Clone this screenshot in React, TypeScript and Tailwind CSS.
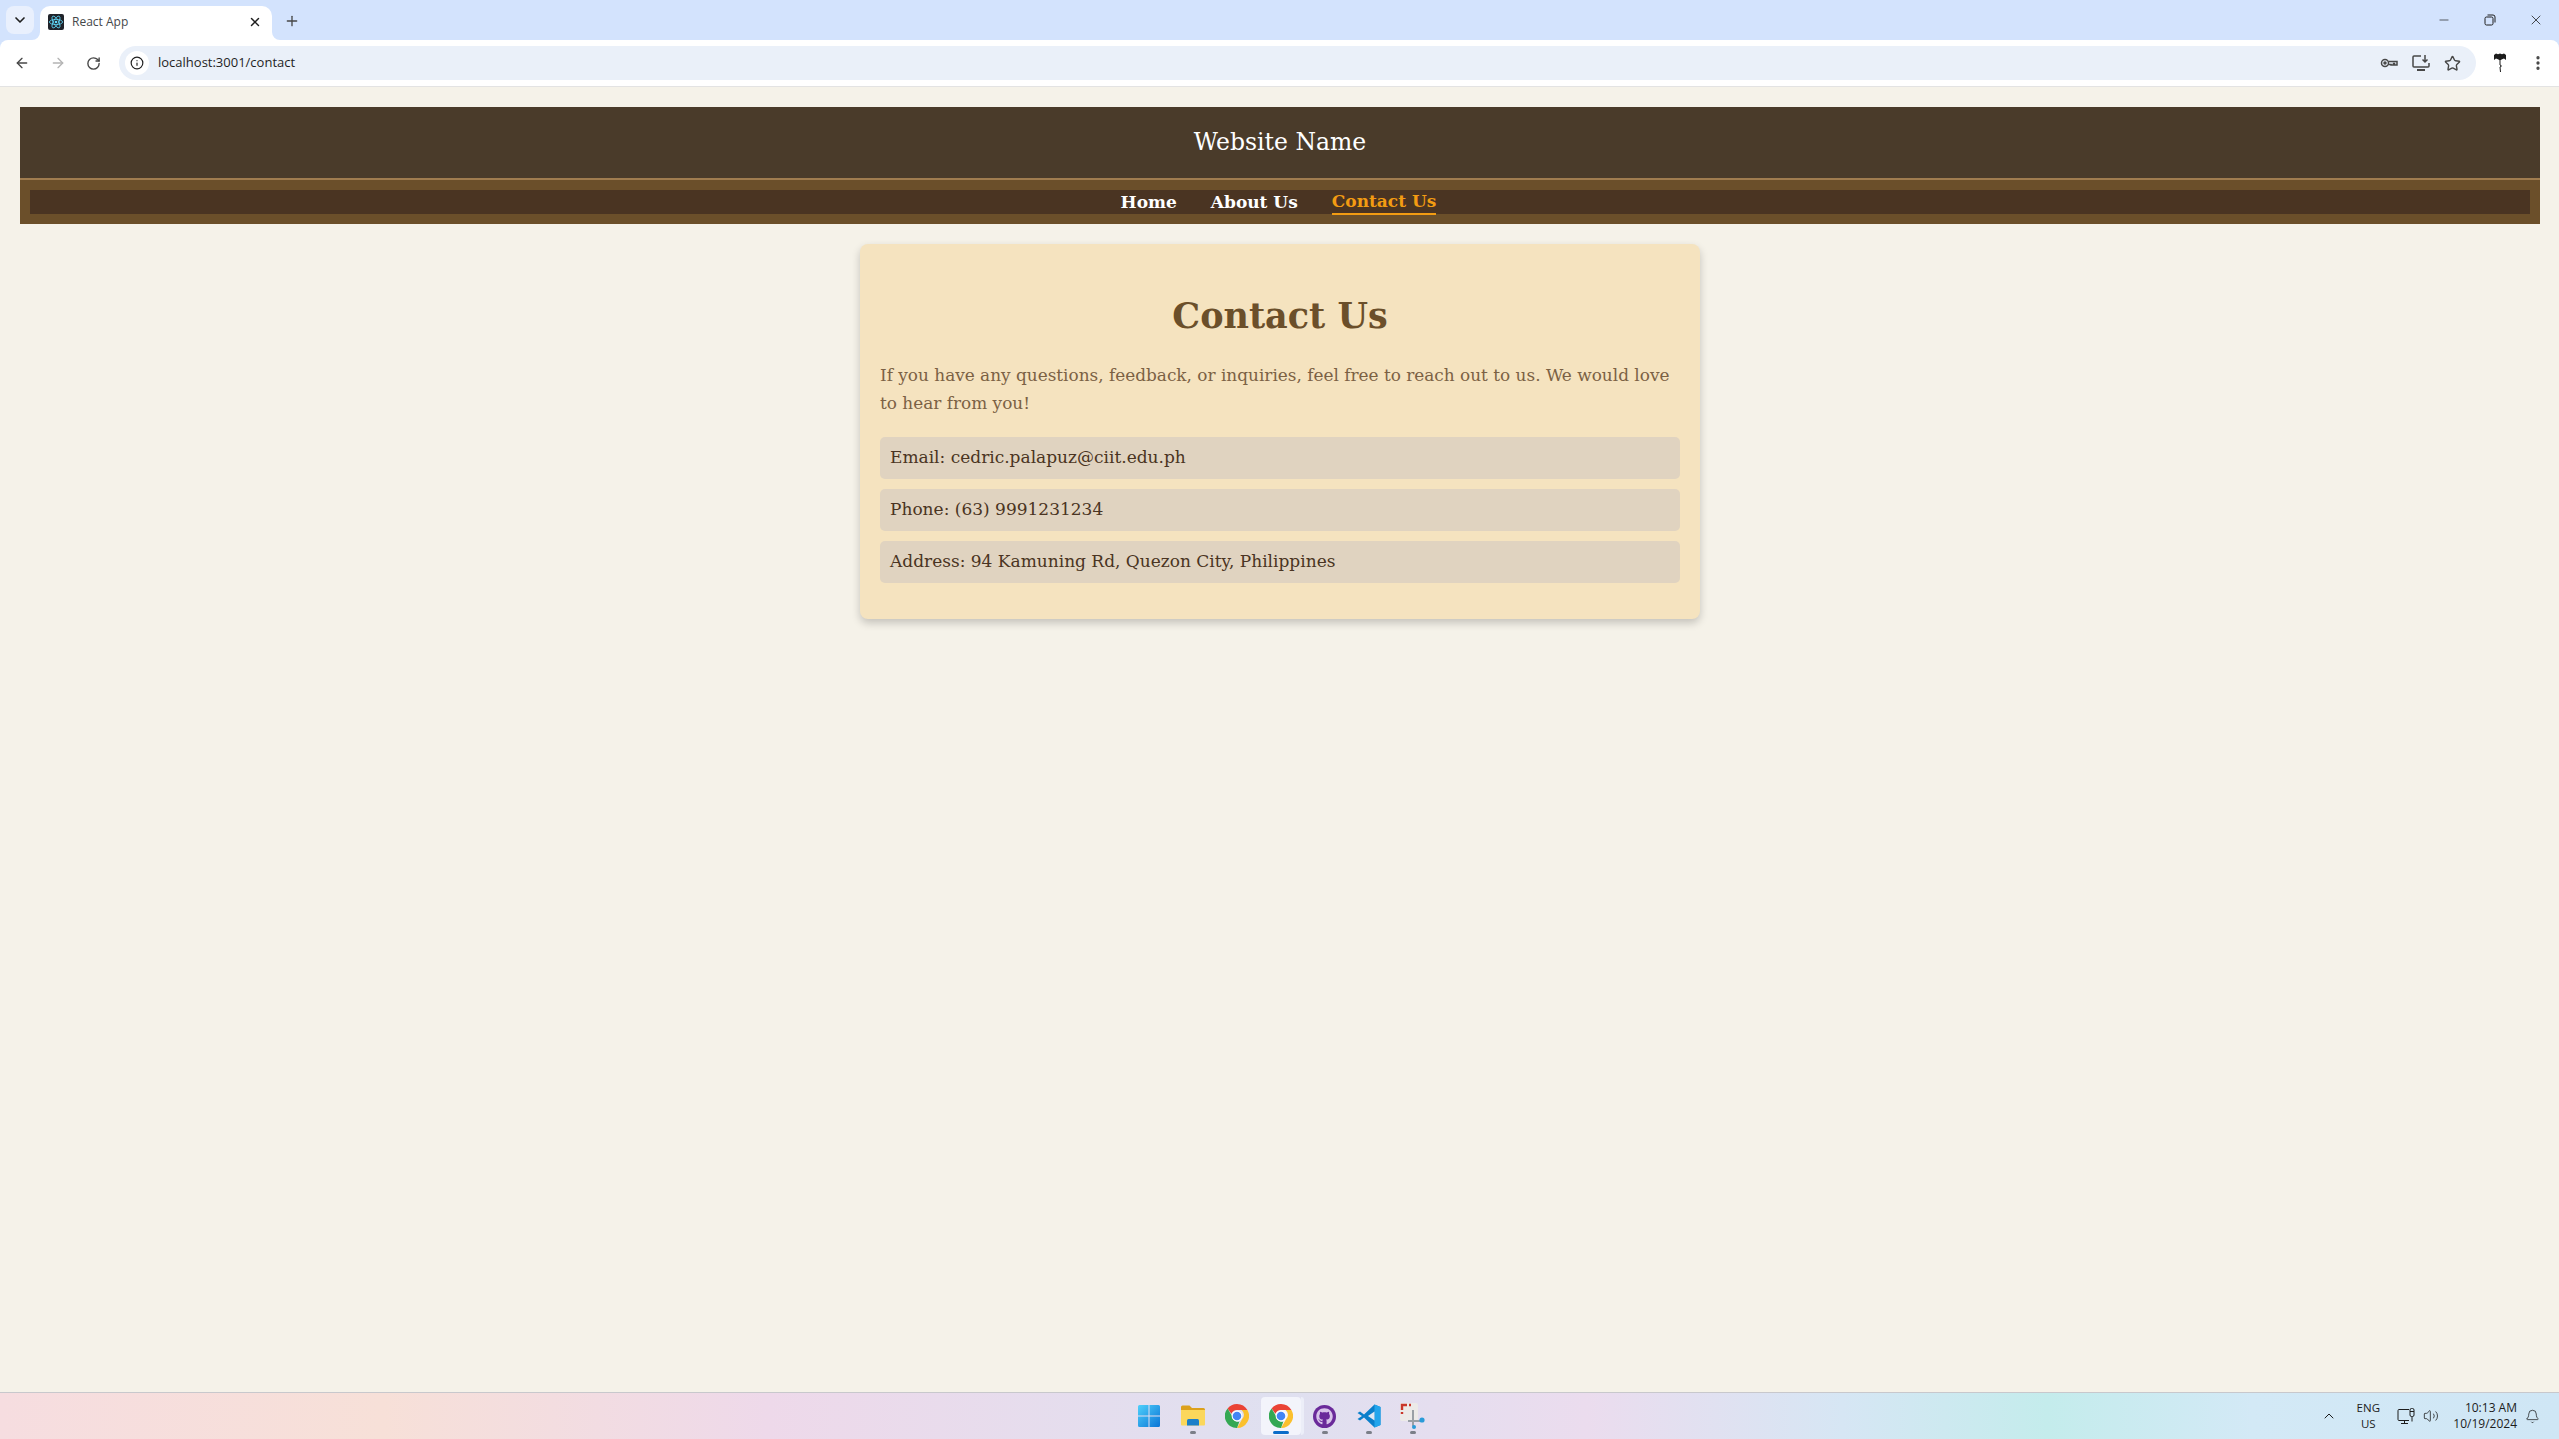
import React from "react";
import { ChevronDown, X, Plus, ArrowLeft, ArrowRight, RotateCw, Info, Star, EllipsisVertical, Minus, ChevronUp, Bell, Volume2 } from "lucide-react";
import { FaGithub } from "react-icons/fa";

const contactRows = [
  "Email: cedric.palapuz@ciit.edu.ph",
  "Phone: (63) 9991231234",
  "Address: 94 Kamuning Rd, Quezon City, Philippines",
];

function ReactFavicon() {
  return (
    <svg width="16" height="16" viewBox="0 0 16 16">
      <rect width="16" height="16" rx="2" fill="#20232a" />
      <g fill="none" stroke="#61dafb" strokeWidth="0.8">
        <ellipse cx="8" cy="8" rx="6.6" ry="2.6" />
        <ellipse cx="8" cy="8" rx="6.6" ry="2.6" transform="rotate(60 8 8)" />
        <ellipse cx="8" cy="8" rx="6.6" ry="2.6" transform="rotate(120 8 8)" />
      </g>
      <circle cx="8" cy="8" r="1.3" fill="#61dafb" />
    </svg>
  );
}

function ChromeLogo() {
  return (
    <svg width="24" height="24" viewBox="0 0 24 24">
      <path d="M12 0a12 12 0 0 1 10.4 6H12a6 6 0 0 0-5.6 3.8L2.6 4.4A12 12 0 0 1 12 0z" fill="#ea4335" />
      <path d="M22.4 6A12 12 0 0 1 12 24l5.2-9a6 6 0 0 0-.7-9z" fill="#fbc02d" />
      <path d="M12 24A12 12 0 0 1 2.6 4.4L7 12a6 6 0 0 0 7.4 5.6L12 24z" fill="#34a853" />
      <circle cx="12" cy="12" r="5.4" fill="#fff" />
      <circle cx="12" cy="12" r="4.3" fill="#4285f4" />
    </svg>
  );
}

function WindowsLogo() {
  return (
    <svg width="24" height="24" viewBox="0 0 24 24">
      <defs>
        <linearGradient id="win" x1="0" y1="0" x2="1" y2="1">
          <stop offset="0" stopColor="#4fd0fb" />
          <stop offset="1" stopColor="#0a74d6" />
        </linearGradient>
      </defs>
      <path d="M1 2.5A1.5 1.5 0 0 1 2.5 1h9v10.5H1zM12.5 1h9A1.5 1.5 0 0 1 23 2.5v9H12.5zM1 12.5h10.5V23h-9A1.5 1.5 0 0 1 1 21.5zM12.5 12.5H23v9a1.5 1.5 0 0 1-1.5 1.5h-9z" fill="url(#win)" />
    </svg>
  );
}

function ExplorerLogo() {
  return (
    <svg width="24" height="24" viewBox="0 0 24 24">
      <path d="M0 3a1.5 1.5 0 0 1 1.5-1.5h7L11 4h11.5A1.5 1.5 0 0 1 24 5.500V8H0z" fill="#dca11c" />
      <path d="M0 6h24v14.500a1 1 0 0 1-1 1H1a1 1 0 0 1-1-1z" fill="#fbd75b" />
      <path d="M6 16.500a1.500 1.500 0 0 1 1.500-1.500h9a1.500 1.500 0 0 1 1.500 1.500v5H6z" fill="#1b7fc9" />
    </svg>
  );
}

function VsCodeLogo() {
  return (
    <svg width="24" height="24" viewBox="0 0 24 24">
      <path d="M17.500 0.500 23.500 3v18l-6 2.500L7 13.500l-4 3-2.500-1.500L5 12 .5 9 3 7.500l4 3z" fill="#0a7fcb" />
      <path d="M17.500 0.500 23.500 3v18l-6 2.500z" fill="#22a5ec" />
      <path d="M17.500 7.500 11 12l6.500 4.500z" fill="#dfe7f3" />
    </svg>
  );
}

function SnipLogo() {
  return (
    <svg width="26" height="26" viewBox="0 0 26 26">
      <rect x="0" y="0" width="18" height="18" rx="2" fill="#eceae8" />
      <path d="M2 7V2h5M9 2h2M2 9v2" fill="none" stroke="#c9362b" strokeWidth="2.400" />
      <path d="M13 7v11h9M8 18h5v5" fill="none" stroke="#9aa0a6" strokeWidth="2" />
      <circle cx="22" cy="17" r="2.600" fill="#2a9bd8" />
      <circle cx="14" cy="24" r="2" fill="#2a9bd8" />
    </svg>
  );
}

function KeyIcon() {
  return (
    <svg width="18" height="18" viewBox="0 0 18 18" fill="none" stroke="#474747" strokeWidth="1.500">
      <circle cx="5" cy="9" r="3.500" />
      <circle cx="5" cy="9" r="1" fill="#474747" />
      <path d="M8.500 7.500H17v3.500h-2.500V9.500h-1V11H11V10.500H8.500" />
    </svg>
  );
}

function InstallIcon() {
  return (
    <svg width="18" height="18" viewBox="0 0 18 18" fill="none" stroke="#474747" strokeWidth="1.500">
      <path d="M9 2H2a1 1 0 0 0-1 1v9a1 1 0 0 0 1 1h14a1 1 0 0 0 1-1V9" />
      <path d="M5 16h8" strokeWidth="2" />
      <path d="M13 1v6.500M10.500 5.500 13 8l2.500-2.500" />
    </svg>
  );
}

function ProfileIcon() {
  return (
    <svg width="14" height="20" viewBox="0 0 14 20">
      <path d="M1 2 3 .5l2 .7 2-.7 2 .7 2-.7L13 2v5l-1 5-2.500 2L8.500 19 7 20 6 18l-1-4-2-2-1.500-5z" fill="#fff" />
      <path d="M1 2 3 .5l2 .7 2-.7 2 .7 2-.7L13 2v5l-2-1.500L8.500 6.500 7 8 5.500 6.500 3 5.500 1 7z" fill="#1c1c1c" />
      <path d="M7 8v4l1.500 1-1.500 1 .5 5" fill="none" stroke="#1c1c1c" strokeWidth="1" />
    </svg>
  );
}

function NetworkIcon() {
  return (
    <svg width="18" height="18" viewBox="0 0 18 18" fill="none" stroke="#1c1c1c" strokeWidth="1">
      <path d="M12 2.500H2a1 1 0 0 0-1 1v9a1 1 0 0 0 1 1h10" />
      <path d="M4 16.500h7M7.500 13.500v3" />
      <rect x="13" y="1.500" width="4" height="8" rx="1.500" />
      <path d="M15 9.500v5M13 4.500h4" />
    </svg>
  );
}

function TaskbarItem({ children, running, active }: { children: React.ReactNode; running?: boolean; active?: boolean }) {
  return (
    <div className={active ? "relative flex h-[38px] w-[40px] items-center justify-center rounded-[4px] bg-[#f3f4fb]" : "relative flex h-[38px] w-[40px] items-center justify-center"}>
      {children}
      {running && !active && <span className="absolute bottom-[1px] h-[3px] w-[6px] rounded-full bg-[#7b7f88]" />}
      {active && <span className="absolute bottom-[1px] h-[3px] w-[16px] rounded-full bg-[#0a6cc9]" />}
      {active && <span className="absolute right-[-3px] top-0 h-[38px] w-[3px] rounded-r-[4px] bg-[#eceef8]" />}
    </div>
  );
}

export default function App() {
  return (
    <div className="flex h-screen flex-col overflow-hidden bg-[#f5f2e9] font-['Open_Sans',sans-serif]">
      <div className="shrink-0 bg-[#d3e3fd]">
        {/* Browser tabs */}
        <div className="flex h-[40px] items-end pl-[6px]">
          <div className="mb-[6px] flex h-[28px] w-[28px] items-center justify-center rounded-[8px] bg-[#e9f0fd]">
            <ChevronDown className="h-4 w-4 text-[#1f1f1f]" strokeWidth={2.5} />
          </div>
          <div className="relative ml-[6px] flex h-[34px] w-[232px] items-center rounded-t-[10px] bg-white pb-[2px] pl-[8px] pr-[10px]">
            <svg className="absolute bottom-0 left-[-8px]" width="8" height="8" viewBox="0 0 8 8"><path d="M8 0v8H0a8 8 0 0 0 8-8z" fill="#fff" /></svg>
            <ReactFavicon />
            <span className="ml-[8px] flex-1 text-[12px] text-[#45474a]">React App</span>
            <X className="h-[14px] w-[14px] text-[#1f1f1f]" strokeWidth={2.5} />
            <svg className="absolute bottom-0 right-[-8px]" width="8" height="8" viewBox="0 0 8 8"><path d="M0 0v8h8a8 8 0 0 1-8-8z" fill="#fff" /></svg>
          </div>
          <Plus className="mb-[11px] ml-[12px] h-4 w-4 text-[#474747]" strokeWidth={2} />
          <div className="mb-[12px] ml-auto flex items-center text-[#1f1f1f]">
            <div className="flex w-[46px] justify-center"><Minus className="h-[14px] w-[14px]" strokeWidth={1.2} /></div>
            <div className="flex w-[46px] justify-center">
              <svg width="12" height="12" viewBox="0 0 12 12" fill="none" stroke="#1f1f1f" strokeWidth="1">
                <rect x="1" y="3" width="8" height="8" rx="1.500" />
                <path d="M3.500 1h5.500a2 2 0 0 1 2 2v5.500" />
              </svg>
            </div>
            <div className="flex w-[46px] justify-center"><X className="h-4 w-4" strokeWidth={1.2} /></div>
          </div>
        </div>

        {/* Address bar */}
        <div className="flex h-[47px] items-center rounded-t-[8px] border-b border-[#e3e3e3] bg-white">
          <div className="ml-[14px] flex items-center gap-[20px] text-[#474747]">
            <ArrowLeft className="h-4 w-4" />
            <ArrowRight className="h-4 w-4 text-[#b4b4b4]" />
            <RotateCw className="h-[15px] w-[15px]" strokeWidth={2.2} />
          </div>
          <div className="ml-[18px] flex h-[34px] flex-1 items-center rounded-full bg-[#eaf0f9] pl-[6px] pr-[15px]">
            <div className="flex h-[24px] w-[24px] items-center justify-center rounded-full bg-white">
              <Info className="h-[14px] w-[14px] text-[#1f1f1f]" strokeWidth={2} />
            </div>
            <span className="ml-[9px] flex-1 text-[13px] text-[#1f1f1f]">localhost:3001/contact</span>
            <div className="flex items-center gap-[14px]">
              <KeyIcon />
              <InstallIcon />
              <Star className="h-[17px] w-[17px] text-[#474747]" strokeWidth={2} />
            </div>
          </div>
          <div className="ml-[17px] mr-[12px] flex items-center gap-[22px]">
            <ProfileIcon />
            <EllipsisVertical className="h-[18px] w-[18px] text-[#474747]" strokeWidth={2.4} />
          </div>
        </div>
      </div>

      {/* Page */}
      <main className="min-h-0 flex-1 pl-[20px] pr-[19px] pt-[20px] font-['DejaVu_Serif',serif]">
        <header className="bg-[#4a3b2a]">
          <div className="flex h-[71px] items-center justify-center text-[23.500px] text-white">Website Name</div>
          <div className="h-[2px] bg-[#a07c4f]" />
          <nav className="bg-[#6b4f2a] p-[10px]">
            <ul className="flex h-[24px] items-center justify-center gap-[34px] bg-[#4a3422] pr-[3px] pt-[1px] text-[17px] font-bold text-white">
              <li>Home</li>
              <li>About Us</li>
              <li className="border-b-2 border-[#f39c12] leading-[23px] text-[#f39c12]">Contact Us</li>
            </ul>
          </nav>
        </header>

        <section className="mx-auto mt-[20px] w-[840px] rounded-[8px] bg-[#f5e3bf] p-[20px] pb-[36px] shadow-[0_4px_8px_rgba(0,0,0,0.2)]">
          <h1 className="mb-[21px] mt-[28px] text-center text-[35px] font-bold leading-[48px] text-[#6b4f2a]">Contact Us</h1>
          <p className="text-[16.900px] leading-[28px] text-[#7b6144]">
            If you have any questions, feedback, or inquiries, feel free to reach out to us. We would love to hear from you!
          </p>
          <ul className="mt-[20px] flex flex-col gap-[10px]">
            {contactRows.map((row) => (
              <li key={row} className="flex h-[42px] items-center rounded-[5px] bg-[#e0d3c0] px-[10px] text-[17px] text-[#4a3422]">
                {row}
              </li>
            ))}
          </ul>
        </section>
      </main>

      {/* Windows taskbar */}
      <footer className="grid h-[47px] shrink-0 grid-cols-[1fr_auto_1fr] items-center border-t border-[#c8c8cc] bg-[linear-gradient(90deg,#f6dde0_0%,#f7e0d8_15%,#eed9ea_30%,#dfe0f0_50%,#ebdcee_62%,#d6e6f4_72%,#c4ecec_80%,#d3e9f6_88%,#cfe6f5_100%)]">
        <div />
        <div className="ml-[2px] flex items-center gap-[4px]">
          <TaskbarItem><WindowsLogo /></TaskbarItem>
          <TaskbarItem running><ExplorerLogo /></TaskbarItem>
          <TaskbarItem><ChromeLogo /></TaskbarItem>
          <TaskbarItem active><ChromeLogo /></TaskbarItem>
          <TaskbarItem running>
            <div className="flex h-[23px] w-[23px] items-center justify-center rounded-full bg-[#6a2a9a]">
              <FaGithub className="h-[17px] w-[17px] text-[#d8c4ea]" />
            </div>
          </TaskbarItem>
          <TaskbarItem running><VsCodeLogo /></TaskbarItem>
          <TaskbarItem running><SnipLogo /></TaskbarItem>
        </div>
        <div className="flex items-center justify-end pr-[19px] text-[#1c1c1c]">
          <ChevronUp className="h-4 w-4" strokeWidth={1.5} />
          <div className="ml-[13px] w-[36px] text-center text-[11.500px] leading-[16px]">ENG<br />US</div>
          <div className="ml-[11px]"><NetworkIcon /></div>
          <Volume2 className="ml-[8px] h-[16px] w-[16px]" strokeWidth={1.2} />
          <div className="ml-[14px] text-right text-[12px] leading-[16px]">10:13 AM<br />10/19/2024</div>
          <Bell className="ml-[8px] h-[15px] w-[15px]" strokeWidth={1.2} />
        </div>
      </footer>
    </div>
  );
}
